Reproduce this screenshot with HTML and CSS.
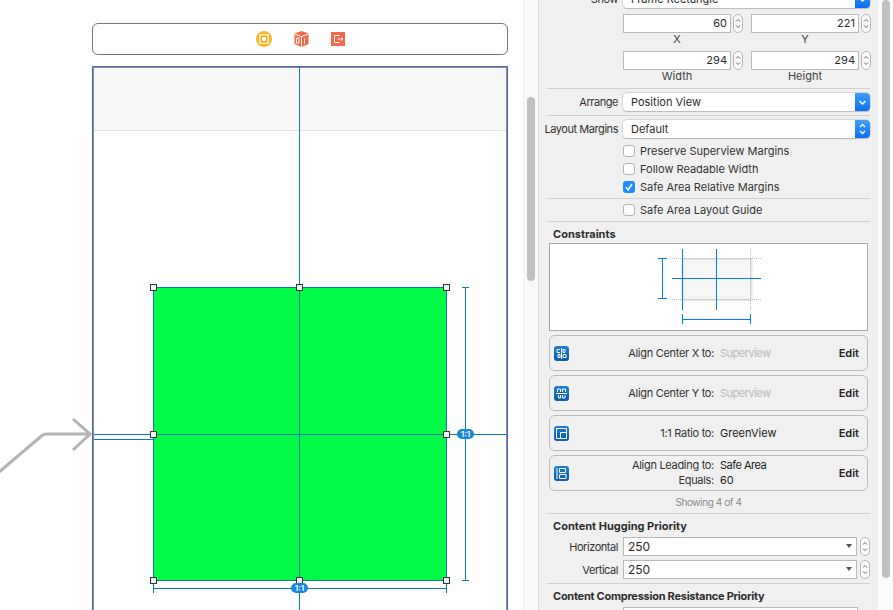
FILE: index.html
```html
<!DOCTYPE html>
<html lang="en">

<head>
    <meta charset="UTF-8">
    <title>Size Inspector</title>
    <link rel="stylesheet" href="styles.css">
</head>

<body>

    <svg class="defs" width="0" height="0">
        <symbol id="updown" viewBox="0 0 10 19">
            <path d="M2.500 7 5 4.500 7.500 7M2.500 12 5 14.500 7.500 12" fill="none" stroke="#444" stroke-width="1"/>
        </symbol>
        <symbol id="icon-x" viewBox="0 0 15 15">
            <path d="M7.500 2v11M3 3.500h3M3 3.500v3h3M4 8.500h2v3H4zM9 3.500h2v3H9zM9 8.500h3v3H9z" fill="none" stroke="#fff"/>
        </symbol>
        <symbol id="icon-y" viewBox="0 0 15 15">
            <path d="M2 7.500h11M3.500 6V3h3v3M8.500 6V3h3v3M4.500 9v3h2V9M8.500 9v3h2.500V9" fill="none" stroke="#fff"/>
        </symbol>
        <symbol id="icon-ratio" viewBox="0 0 15 15">
            <path d="M2.500 2.500h10v10h-10zM6.500 12.500v-6h6" fill="none" stroke="#fff"/>
        </symbol>
        <symbol id="icon-lead" viewBox="0 0 15 15">
            <path d="M3 2v11M5.500 2.500h6v4h-6zM5.500 8.500h6.500v4H5.500z" fill="none" stroke="#fff"/>
        </symbol>
    </svg>

    <div class="canvas">
        <div class="dock">
            <svg class="dock-icon" width="16" height="16" viewBox="0 0 16 16">
                <circle cx="8" cy="8" r="8" fill="#f7b733"/>
                <rect x="3.500" y="3.500" width="9" height="9" fill="#ffd877" stroke="#fbe3a0"/>
                <rect x="5.500" y="5.500" width="5" height="5" fill="#fff" stroke="#e9a326"/>
            </svg>
            <svg class="dock-icon" width="15" height="16" viewBox="0 0 15 16">
                <path d="M7.500 0 14.500 2.500V13L7.500 16 .5 13V2.500z" fill="#f2694a"/>
                <path d="M.5 3 7.500 5.500 14.500 3M7.500 5.500V16" fill="none" stroke="#fff"/>
                <path d="M2.500 7h2.500v5H2.500zM10.500 7.500v5" fill="none" stroke="#fff"/>
            </svg>
            <svg class="dock-icon" width="14" height="14" viewBox="0 0 14 14">
                <rect width="14" height="14" fill="#f4694a"/>
                <path d="M8.500 3.500h-5v7h5M6.500 7h5.500M10.500 5.500 12 7 10.500 8.500" fill="none" stroke="#fff"/>
            </svg>
        </div>

        <div class="frame">
            <div class="navbar"></div>
        </div>

        <svg class="diagram" width="523" height="610" viewBox="0 0 523 610">
            <path d="M-2 473 42 435.500Q44 434 47 434H90M73 419 90 434 73 450" fill="none" stroke="#b4b4b4" stroke-width="3"/>
            <rect x="153.500" y="287.500" width="293" height="293" fill="#00fb47" stroke="#1078b4"/>
            <g fill="none" stroke="#1078b4">
                <path d="M299.500 67V610M94 434.500H506M94 439.500H153.500V443"/>
                <path d="M465.500 287.500V580.500M462 287.500H469M462 580.500H469"/>
                <path d="M153.500 588.500H446.500M153.500 584V593M446.500 584V593"/>
            </g>
            <g fill="#eef7f7" stroke="#333">
                <rect x="150.500" y="284.500" width="6" height="6"/>
                <rect x="296.500" y="284.500" width="6" height="6"/>
                <rect x="443.500" y="284.500" width="6" height="6"/>
                <rect x="150.500" y="431.500" width="6" height="6"/>
                <rect x="443.500" y="431.500" width="6" height="6"/>
                <rect x="150.500" y="577.500" width="6" height="6"/>
                <rect x="296.500" y="577.500" width="6" height="6"/>
                <rect x="443.500" y="577.500" width="6" height="6"/>
            </g>
        </svg>
        <span class="badge badge-right">1:1</span>
        <span class="badge badge-bottom">1:1</span>
    </div>

    <div class="track">
        <div class="thumb thumb-left"></div>
    </div>

    <div class="panel">
        <div class="row row-show">
            <label class="lbl">Show</label>
            <div class="select">Frame Rectangle<span class="arrow"><svg width="15" height="18" viewBox="0 0 15 18"><path d="M4.500 8 7.500 11 10.500 8" fill="none" stroke="#fff" stroke-width="1.500"/></svg></span></div>
        </div>

        <div class="fields">
            <div class="field"><div class="num"><span class="input">60</span><svg class="stepper" width="10" height="19"><use href="#updown"/></svg></div><div class="cap">X</div></div>
            <div class="field"><div class="num"><span class="input">221</span><svg class="stepper" width="10" height="19"><use href="#updown"/></svg></div><div class="cap">Y</div></div>
            <div class="field"><div class="num"><span class="input">294</span><svg class="stepper" width="10" height="19"><use href="#updown"/></svg></div><div class="cap">Width</div></div>
            <div class="field"><div class="num"><span class="input">294</span><svg class="stepper" width="10" height="19"><use href="#updown"/></svg></div><div class="cap">Height</div></div>
        </div>

        <div class="sep"></div>
        <div class="row row-pad">
            <label class="lbl">Arrange</label>
            <div class="select">Position View<span class="arrow"><svg width="15" height="18" viewBox="0 0 15 18"><path d="M4.500 8 7.500 11 10.500 8" fill="none" stroke="#fff" stroke-width="1.500"/></svg></span></div>
        </div>
        <div class="sep"></div>
        <div class="row row-pad-top">
            <label class="lbl">Layout Margins</label>
            <div class="select">Default<span class="arrow"><svg width="15" height="18" viewBox="0 0 15 18"><path d="M5 7 7.500 4.500 10 7M5 11 7.500 13.500 10 11" fill="none" stroke="#fff" stroke-width="1.300"/></svg></span></div>
        </div>

        <div class="checks">
            <div class="check"><span class="box"></span>Preserve Superview Margins</div>
            <div class="check"><span class="box"></span>Follow Readable Width</div>
            <div class="check"><span class="box on"><svg width="12" height="12" viewBox="0 0 12 12"><path d="M3 6.200 5.200 8.800 9 3" fill="none" stroke="#fff" stroke-width="1.600"/></svg></span>Safe Area Relative Margins</div>
        </div>
        <div class="sep sep-tight"></div>
        <div class="check check-solo"><span class="box"></span>Safe Area Layout Guide</div>
        <div class="sep"></div>

        <div class="title">Constraints</div>
        <div class="constraint-box">
            <svg width="317" height="86" viewBox="0 0 317 86">
                <rect x="132.500" y="15" width="69" height="41" fill="#f6f6f6" stroke="#e4e4e4" stroke-width="2"/>
                <path d="M122 14.500H211M122 55.500H211M200.500 5V66" fill="none" stroke="#bbb" stroke-dasharray="1 1"/>
                <path d="M132.500 5V66M166.500 5V66M122 34.500H211M112.500 14.500V54.500M108 14.500H117M108 54.500H117M132.500 75.500H200.500M132.500 70V80M200.500 70V80" fill="none" stroke="#007aff"/>
            </svg>
        </div>

        <div class="cards">
            <div class="card">
                <svg class="cicon" width="15" height="15"><use href="#icon-x"/></svg>
                <span class="ckey">Align Center X to:</span><span class="cval muted">Superview</span><b class="edit">Edit</b>
            </div>
            <div class="card">
                <svg class="cicon" width="15" height="15"><use href="#icon-y"/></svg>
                <span class="ckey">Align Center Y to:</span><span class="cval muted">Superview</span><b class="edit">Edit</b>
            </div>
            <div class="card">
                <svg class="cicon" width="15" height="15"><use href="#icon-ratio"/></svg>
                <span class="ckey">1:1 Ratio to:</span><span class="cval">GreenView</span><b class="edit">Edit</b>
            </div>
            <div class="card">
                <svg class="cicon" width="15" height="15"><use href="#icon-lead"/></svg>
                <div class="clines">
                    <div><span class="ckey">Align Leading to:</span><span class="cval tight">Safe Area</span></div>
                    <div><span class="ckey">Equals:</span><span class="cval">60</span></div>
                </div>
                <b class="edit">Edit</b>
            </div>
        </div>

        <div class="showing">Showing 4 of 4</div>
        <div class="sep sep-flush"></div>

        <div class="title title-gap">Content Hugging Priority</div>
        <div class="row combo-row">
            <label class="lbl">Horizontal</label>
            <div class="combo">250<span class="tri"></span></div>
            <svg class="stepper" width="10" height="19"><use href="#updown"/></svg>
        </div>
        <div class="row combo-row">
            <label class="lbl">Vertical</label>
            <div class="combo">250<span class="tri"></span></div>
            <svg class="stepper" width="10" height="19"><use href="#updown"/></svg>
        </div>
        <div class="sep"></div>

        <div class="title title-gap title-long">Content Compression Resistance Priority</div>
        <div class="row combo-row">
            <label class="lbl"></label>
            <div class="combo"></div>
        </div>
    </div>

    <div class="track track-right">
        <div class="thumb thumb-right"></div>
    </div>

</body>

</html>
```

FILE: styles.css
```css
* {
    margin: 0;
    padding: 0;
    box-sizing: border-box;
}

html,
body {
    height: 610px;
    overflow: hidden;
}

body {
    display: flex;
    background: #fff;
    font-family: Inter, "Liberation Sans", sans-serif;
    font-size: 11px;
    line-height: 14px;
    color: #2b2b2b;
}

.defs {
    position: absolute;
}

/* canvas */

.canvas {
    position: relative;
    flex: 0 0 523px;
    height: 610px;
    padding: 23px 0 0 92px;
    overflow: hidden;
}

.dock {
    display: flex;
    align-items: center;
    justify-content: center;
    gap: 22px;
    width: 416px;
    height: 32px;
    border: 1px solid #737373;
    border-radius: 6px;
}

.frame {
    width: 416px;
    height: 600px;
    margin-top: 11px;
    border: 1px solid #666;
    box-shadow: inset 0 0 0 1px #6f90e0;
    padding: 1px;
}

.navbar {
    height: 63px;
    background: #f8f8f8;
    border-bottom: 1px solid #e2e2e2;
}

.diagram {
    position: absolute;
    left: 0;
    top: 0;
}

.badge {
    position: absolute;
    width: 17px;
    height: 10px;
    border-radius: 5px;
    background: #1c86d8;
    color: #e8f4ff;
    font-size: 8px;
    font-weight: 700;
    line-height: 10px;
    text-align: center;
}

.badge-right {
    left: 457px;
    top: 429px;
}

.badge-bottom {
    left: 291px;
    top: 583px;
}

/* scroll strips */

.track {
    flex: 0 0 15px;
    height: 610px;
    padding-left: 4px;
    background: #f9f9f9;
    border-left: 1px solid #f0f0f0;
}

.track-right {
    background: #fbfbfb;
    border-left: 0;
}

.thumb {
    width: 8px;
    border-radius: 4px;
    background: #c1c1c1;
}

.thumb-left {
    height: 184px;
    margin: 97px 0 0 -1px;
}

.thumb-right {
    height: 578px;
}

/* inspector */

.panel {
    flex: 0 0 340px;
    height: 610px;
    padding: 0 8px;
    background: #f0f0f0;
    border-left: 1px solid #dcdcdc;
    overflow: hidden;
}

.row {
    display: flex;
    align-items: center;
}

.row-show {
    margin-top: -10px;
}

.row-pad {
    margin: 4px 0;
}

.row-pad-top {
    margin-top: 4px;
}

.lbl {
    flex: 0 0 72px;
    min-width: 0;
    height: 14px;
    margin-right: 4px;
    padding-right: 1px;
    text-align: right;
    white-space: nowrap;
    direction: rtl;
    letter-spacing: -.45px;
    color: #333;
}

.select {
    position: relative;
    width: 248px;
    height: 18px;
    padding-left: 8px;
    background: #fff;
    border-radius: 4px;
    box-shadow: 0 0 0 .5px #bbb, 0 1px 1px #bbb;
    line-height: 18px;
}

.arrow {
    position: absolute;
    right: 0;
    top: 0;
    width: 15px;
    height: 18px;
    border-radius: 0 4px 4px 0;
    background: linear-gradient(#3fa0fb, #0a6ef0);
}

.arrow svg {
    display: block;
}

.fields {
    display: grid;
    grid-template-columns: 120px 120px;
    column-gap: 8px;
    margin: 6px 0 0 76px;
}

.num {
    display: flex;
    gap: 2px;
}

.input {
    width: 108px;
    height: 19px;
    padding-right: 3px;
    background: #fff;
    border: 1px solid #b9b9b9;
    text-align: right;
    line-height: 17px;
}

.stepper {
    flex: none;
    background: #fbfbfb;
    border: 1px solid #b5b5b5;
    border-radius: 5px;
}

.cap {
    width: 108px;
    height: 18px;
    text-align: center;
    line-height: 13px;
    color: #444;
}

.sep {
    height: 1px;
    background: #d0d0d0;
}

.sep-tight {
    margin-top: 2px;
}

.sep-flush {
    margin-top: 4px;
}

.checks {
    margin-top: 4px;
}

.check {
    display: flex;
    align-items: center;
    gap: 5px;
    height: 18px;
    padding-left: 76px;
    color: #333;
}

.check-solo {
    margin: 2px 0;
}

.box {
    width: 12px;
    height: 12px;
    background: #fff;
    border: 1px solid #b4b4b4;
    border-radius: 3px;
}

.box.on {
    background: #1a8cff;
    border: 0;
}

.box svg {
    display: block;
}

.title {
    height: 21px;
    padding: 5px 0 0 6px;
    font-weight: 700;
    color: #2e2e2e;
}

.title-gap {
    height: 23px;
}

.title-long {
    letter-spacing: -.26px;
    white-space: nowrap;
}

.constraint-box {
    width: 319px;
    height: 88px;
    margin-left: 2px;
    background: #fff;
    border: 1px solid #a9a9a9;
}

.constraint-box svg {
    display: block;
}

.cards {
    display: flex;
    flex-direction: column;
    gap: 4px;
    margin: 4px 0 0 2px;
}

.card {
    display: flex;
    align-items: center;
    width: 319px;
    height: 36px;
    padding: 0 8px 0 4px;
    border: 1px solid #bcbcbc;
    border-radius: 6px;
}

.cicon {
    flex: none;
    background: linear-gradient(#1d7fd6, #0a5bab);
    border-radius: 3px;
}

.ckey {
    display: inline-block;
    width: 145px;
    margin-right: 6px;
    text-align: right;
    letter-spacing: -.3px;
    color: #333;
}

.cval {
    flex: 1;
    color: #222;
}

.muted {
    letter-spacing: -.5px;
    color: #b9b9b9;
}

.tight {
    letter-spacing: -.5px;
}

.clines {
    flex: 1;
    line-height: 15px;
}

.edit {
    font-weight: 600;
    color: #222;
}

.showing {
    height: 15px;
    margin-top: 3px;
    text-align: center;
    font-size: 10px;
    letter-spacing: -.4px;
    line-height: 16px;
    color: #8b8b8b;
}

.combo-row {
    margin-bottom: 4px;
}

.combo {
    position: relative;
    width: 235px;
    height: 19px;
    margin-right: 3px;
    padding-left: 4px;
    background: #fff;
    border: 1px solid #b9b9b9;
    font-size: 12px;
    line-height: 17px;
}

.tri {
    position: absolute;
    right: 4px;
    top: 6px;
    border: 3.500px solid transparent;
    border-top: 4px solid #555;
    border-bottom: 0;
}
```
